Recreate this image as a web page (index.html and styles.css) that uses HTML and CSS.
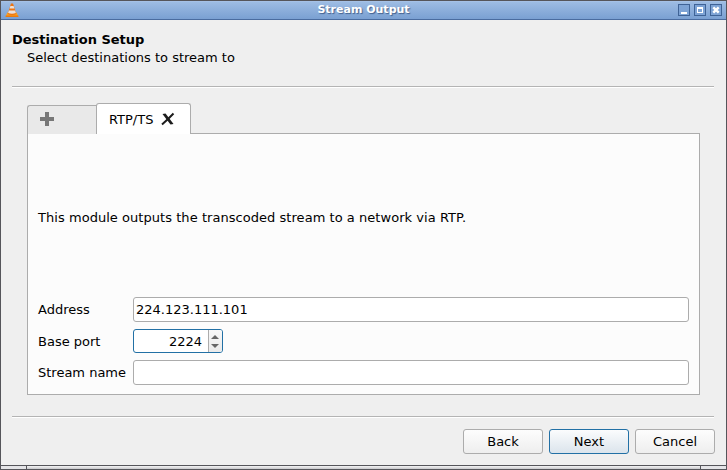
FILE: index.html
```html
<!DOCTYPE html>
<html lang="en">
<head>
<meta charset="utf-8">
<title>Stream Output</title>
<link rel="stylesheet" href="styles.css">
</head>
<body>
<div class="window">
  <header class="titlebar">
    <svg class="cone" width="14" height="16" viewBox="0 0 14 16">
      <path d="M2.300 10.500h9.400L13.500 15h-13z" fill="#f9a01c"/>
      <path d="M.7 13.500h12.600v1.500H.7z" fill="#ea7a10"/>
      <path d="M6 1.500h2L11.300 12q-4.300 2-8.600 0z" fill="#ee7512"/>
      <path d="M5.400 4h3.200l.8 2.500H4.600zM3.900 8.500h6.200l.8 2.500q-3.900 1.400-7.800 0z" fill="#e9e2dc"/>
    </svg>
    <h1 class="caption">Stream Output</h1>
    <div class="controls">
      <span class="control"><svg width="10" height="10"><path d="M2 7h6v2H2z" fill="#fff"/></svg></span>
      <span class="control"><svg width="10" height="10"><path d="M2 2h6v6H2zM3 4v3h4V4z" fill="#fff" fill-rule="evenodd"/></svg></span>
      <span class="control"><svg width="10" height="10"><path d="M2.300 2.300l5.400 5.400m0-5.400l-5.400 5.400" stroke="#fff" stroke-width="2.400"/></svg></span>
    </div>
  </header>
  <main class="content">
    <h2 class="heading">Destination Setup</h2>
    <p class="subheading">Select destinations to stream to</p>
    <div class="rule"></div>
    <div class="tabs">
      <div class="tab tab-add"><svg width="14" height="14"><path d="M5 0h4v5h5v4H9v5H5V9H0V5h5z" fill="#777"/></svg></div>
      <div class="tab tab-active"><span class="tab-name">RTP/TS</span><svg width="14" height="14"><path d="M1.500 2L4.500 1.500l3.500 4.500 4.500 6-3 .5L6 8z" fill="#1c1c1c"/><path d="M12.500 1.500L7 7 1 12.500" stroke="#1c1c1c" stroke-width="2" fill="none"/></svg></div>
    </div>
    <section class="pane">
      <p class="description">This module outputs the transcoded stream to a network via RTP.</p>
      <div class="form">
        <span class="label">Address</span><div class="field">224.123.111.101</div>
        <span class="label label-port">Base port</span>
        <div class="spin"><span class="value">2224</span><span class="steps"><svg width="13" height="22"><path d="M2 9l4-4 4 4zM2 14h8l-4 4z" fill="#666"/></svg></span></div>
        <span class="label">Stream name</span><div class="field"></div>
      </div>
    </section>
    <div class="rule rule-bottom"></div>
    <div class="buttons">
      <button class="button">Back</button>
      <button class="button button-default">Next</button>
      <button class="button">Cancel</button>
    </div>
  </main>
  <footer class="grip"><span class="corner"></span><span class="edge"></span><span class="corner"></span></footer>
</div>
</body>
</html>
```
FILE: styles.css
```css
* { box-sizing: border-box; }
body { margin: 0; font: 13px/18px "DejaVu Sans", sans-serif; color: #000; }
h1, h2, p { margin: 0; font-size: 13px; }
svg { display: block; }
.window { width: 727px; height: 470px; background: #efefef; border: 1px solid #55555a; overflow: hidden; display: flex; flex-direction: column; }
.titlebar { height: 19px; flex: none; display: grid; grid-template-columns: 60px 1fr 60px; align-items: start; background: linear-gradient(#9dbce3, #7aa0d2); border-top: 1px solid #a5c1e6; border-bottom: 1px solid #4a6c9f; }
.cone { margin-left: 4px; }
.caption { text-align: center; font-size: 11px; line-height: 15px; color: #fff; text-shadow: 1px 1px 1px #40608f; }
.controls { display: flex; justify-content: flex-end; gap: 4px; padding: 2px 4px 0 0; }
.control { width: 12px; height: 12px; border: 1px solid #3f6396; background: #7da3d5; }
.content { flex: 1; padding: 10px 11px 0; }
.heading { height: 18px; line-height: 20px; }
.subheading { padding-left: 15px; height: 18px; line-height: 20px; }
.rule { height: 2px; margin-top: 20px; margin-right: 1px; border-top: 1px solid #b4b4b4; border-bottom: 1px solid #fff; }
.tabs { display: flex; align-items: flex-end; height: 46px; padding-left: 15px; }
.tab { border: 1px solid #acacac; border-bottom: 0; border-radius: 3px 3px 0 0; }
.tab-add { width: 70px; height: 29px; padding: 6px 12px; background: #e9e9e9; border-right: 0; border-top-right-radius: 0; }
.tab-active { position: relative; z-index: 1; width: 95px; height: 31px; margin-left: -1px; padding: 0 12px; display: flex; align-items: center; gap: 8px; background: #fff; }
.tab-name { padding-top: 2px; }
.pane { height: 262px; margin: -1px 15px 0; padding: 0 10px; border: 1px solid #acacac; background: #fcfcfc; }
.description { height: 163px; padding-top: 75px; letter-spacing: .045px; }
.form { display: grid; grid-template-columns: 95px 1fr; grid-template-rows: 25px 25px 25px; row-gap: 6.500px; align-items: center; }
.field { height: 25px; line-height: 23px; border: 1px solid #acacac; border-radius: 3px; padding-left: 2px; background: #fff; }
.label-port { padding-top: 1px; }
.spin { width: 90px; height: 24px; display: flex; border: 1px solid #2270a5; border-radius: 3px; background: #fff; overflow: hidden; }
.value { flex: 1; text-align: right; padding-right: 6px; line-height: 24px; }
.steps { width: 14px; border-left: 1px solid #acacac; background: linear-gradient(#f8f8f8, #eaeaea); }
.rule-bottom { margin-top: 21px; }
.buttons { display: flex; justify-content: flex-end; gap: 6px; margin-top: 11px; }
.button { width: 80px; height: 25px; padding: 0; font: inherit; color: #000; border: 1px solid #acacac; border-radius: 3px; background: linear-gradient(#fdfdfd, #eeeeee); }
.button-default { border-color: #2270a5; background: linear-gradient(#fbfcfd, #dbe4ec); }
.grip { height: 4px; flex: none; display: flex; border-top: 1px solid #55555a; background: #e4e4e7; }
.corner { width: 25px; }
.edge { flex: 1; border: solid #55555a; border-width: 0 1px; background: linear-gradient(#f4f4f4, #c8c8cc); }
```
